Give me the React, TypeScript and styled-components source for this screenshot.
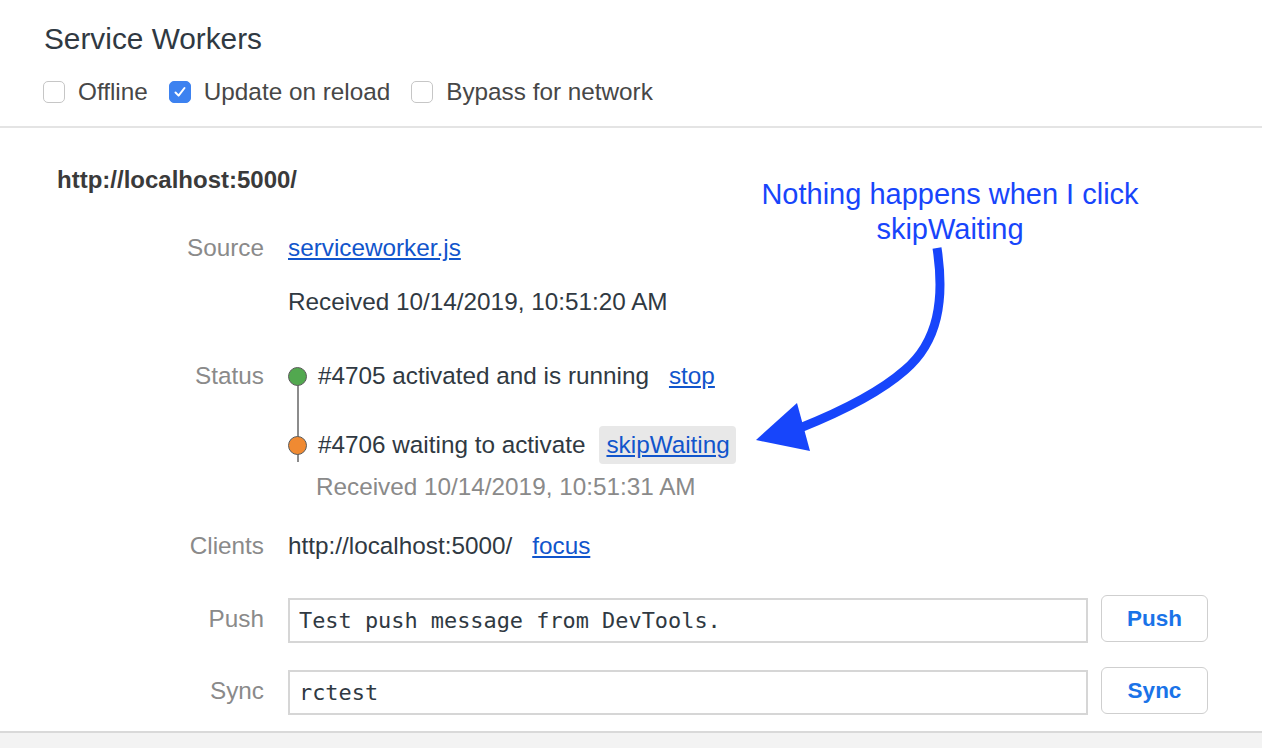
import styled, { createGlobalStyle } from "styled-components";

const GlobalStyle = createGlobalStyle`
  html, body {
    margin: 0;
    padding: 0;
    background: #ffffff;
  }

  body {
    font-family: "Liberation Sans", Helvetica, Arial, sans-serif;
    color: #303942;
    overflow: hidden;
  }
`;

const Page = styled.div`
  position: relative;
  width: 1262px;
  height: 748px;
  overflow: hidden;
  display: flex;
  flex-direction: column;
`;

const Header = styled.header`
  padding: 21px 0 19px 44px;
  border-bottom: 2px solid #e4e4e4;

  h1 {
    margin: 0;
    font-size: 29.8px;
    line-height: 36px;
    font-weight: 400;
    color: #303942;
  }
`;

const Toolbar = styled.div`
  display: flex;
  align-items: center;
  height: 30px;
  margin: 20px 0 0 -1px;
  gap: 21px;
`;

const Check = styled.label`
  display: flex;
  align-items: center;
  gap: 13px;
  font-size: 24.3px;
  line-height: 30px;
  color: #474747;
`;

const Box = styled.span<{ $checked?: boolean }>`
  width: 22px;
  height: 22px;
  box-sizing: border-box;
  border-radius: 5px;
  border: 1.5px solid ${(p) => (p.$checked ? "#3d82f0" : "#c6c6c6")};
  background: ${(p) => (p.$checked ? "#3d82f0" : "#ffffff")};
  display: flex;
  align-items: center;
  justify-content: center;
`;

const Content = styled.section`
  padding-top: 37px;
  font-size: 24.3px;
  line-height: 30px;
`;

const Origin = styled.div`
  padding-left: 57px;
  font-weight: 700;
  font-size: 24px;
  color: #3a3a3a;
`;

const Row = styled.div<{ $gap: number; $align?: string }>`
  display: grid;
  grid-template-columns: 264px 1fr;
  column-gap: 24px;
  align-items: ${(p) => p.$align || "start"};
  margin-top: ${(p) => p.$gap}px;
  padding-right: 54px;
`;

const Label = styled.div`
  text-align: right;
  color: #8a8a8a;
`;

const Value = styled.div`
  display: flex;
  align-items: center;
  gap: 20px;
  color: #303942;
`;

const Link = styled.a`
  color: #1155cc;
  text-decoration: underline;
  text-underline-offset: 2px;
  cursor: pointer;
`;

const StatusList = styled.div`
  position: relative;

  &::before {
    content: "";
    position: absolute;
    left: 8.5px;
    top: 15px;
    width: 2px;
    height: 86px;
    background: #8c8c8c;
  }
`;

const Version = styled.div<{ $gap?: number }>`
  position: relative;
  display: flex;
  align-items: center;
  margin-top: ${(p) => p.$gap || 0}px;
  min-height: 30px;
`;

const Dot = styled.span<{ $color: string }>`
  width: 19px;
  height: 19px;
  box-sizing: border-box;
  border-radius: 50%;
  border: 1.5px solid #5b5b5b;
  background: ${(p) => p.$color};
  margin-right: 11px;
  flex: none;
`;

const Action = styled.span<{ $boxed?: boolean }>`
  margin-left: ${(p) => (p.$boxed ? 14 : 20)}px;
  padding: ${(p) => (p.$boxed ? "4px 6px 4px 7px" : "0")};
  background: ${(p) => (p.$boxed ? "#e8e8e8" : "transparent")};
  border-radius: 4px;
`;

const Received = styled.div`
  margin: 8px 0 0 28px;
  color: #8a8a8a;
`;

const Field = styled.div`
  display: flex;
  align-items: center;
  gap: 13px;
`;

const Input = styled.input`
  flex: 1;
  height: 45px;
  box-sizing: border-box;
  margin-top: 4px;
  border: 2px solid #d6d6d6;
  border-radius: 0;
  padding: 0 9px;
  font-family: "DejaVu Sans Mono", "Liberation Mono", monospace;
  font-size: 21.9px;
  color: #303942;
  outline: none;
`;

const Button = styled.button`
  width: 107px;
  height: 47px;
  box-sizing: border-box;
  border: 1.5px solid #cfcfcf;
  border-radius: 6px;
  background: #ffffff;
  font-family: "Liberation Sans", Helvetica, Arial, sans-serif;
  font-size: 22.5px;
  font-weight: 700;
  color: #1a73e8;
`;

const Footer = styled.div`
  margin-top: 16px;
  flex: 1;
  border-top: 2px solid #d9d9d9;
  background: #f3f3f3;
`;

const Note = styled.div`
  position: absolute;
  left: 740px;
  top: 177px;
  width: 420px;
  text-align: center;
  font-size: 29px;
  line-height: 35px;
  color: #1745fb;
`;

const Arrow = styled.svg`
  position: absolute;
  left: 0;
  top: 0;
  pointer-events: none;
`;

export default function App() {
  return (
    <Page>
      <GlobalStyle />
      <Header>
        <h1>Service Workers</h1>
        <Toolbar>
          <Check>
            <Box />
            Offline
          </Check>
          <Check>
            <Box $checked>
              <svg width="14" height="14" viewBox="0 0 14 14">
                <path
                  d="M2.5 7.5 L5.6 10.6 L11.5 3"
                  fill="none"
                  stroke="#ffffff"
                  strokeWidth="2"
                  strokeLinecap="round"
                  strokeLinejoin="round"
                />
              </svg>
            </Box>
            Update on reload
          </Check>
          <Check>
            <Box />
            Bypass for network
          </Check>
        </Toolbar>
      </Header>

      <Content>
        <Origin>http://localhost:5000/</Origin>

        <Row $gap={38}>
          <Label>Source</Label>
          <Value>
            <Link>serviceworker.js</Link>
          </Value>
        </Row>

        <Row $gap={24}>
          <div />
          <Value>Received 10/14/2019, 10:51:20 AM</Value>
        </Row>

        <Row $gap={44}>
          <Label>Status</Label>
          <StatusList>
            <Version>
              <Dot $color="#52a84f" />
              #4705 activated and is running
              <Action>
                <Link>stop</Link>
              </Action>
            </Version>
            <Version $gap={35}>
              <Dot $color="#f08a32" />
              #4706 waiting to activate
              <Action $boxed>
                <Link>skipWaiting</Link>
              </Action>
            </Version>
            <Received>Received 10/14/2019, 10:51:31 AM</Received>
          </StatusList>
        </Row>

        <Row $gap={29}>
          <Label>Clients</Label>
          <Value>
            http://localhost:5000/
            <Link>focus</Link>
          </Value>
        </Row>

        <Row $gap={33} $align="center">
          <Label>Push</Label>
          <Field>
            <Input defaultValue="Test push message from DevTools." />
            <Button>Push</Button>
          </Field>
        </Row>

        <Row $gap={23} $align="center">
          <Label>Sync</Label>
          <Field>
            <Input defaultValue="rctest" />
            <Button>Sync</Button>
          </Field>
        </Row>
      </Content>

      <Footer />

      <Note>
        Nothing happens when I click
        <br />
        skipWaiting
      </Note>
      <Arrow width="1262" height="748" viewBox="0 0 1262 748">
        <path
          d="M937 248 C 945 300, 938 342, 905 370 C 880 392, 845 410, 800 428"
          fill="none"
          stroke="#1745fb"
          strokeWidth="9"
        />
        <polygon points="756,440 797,403 810,451" fill="#1745fb" />
      </Arrow>
    </Page>
  );
}
